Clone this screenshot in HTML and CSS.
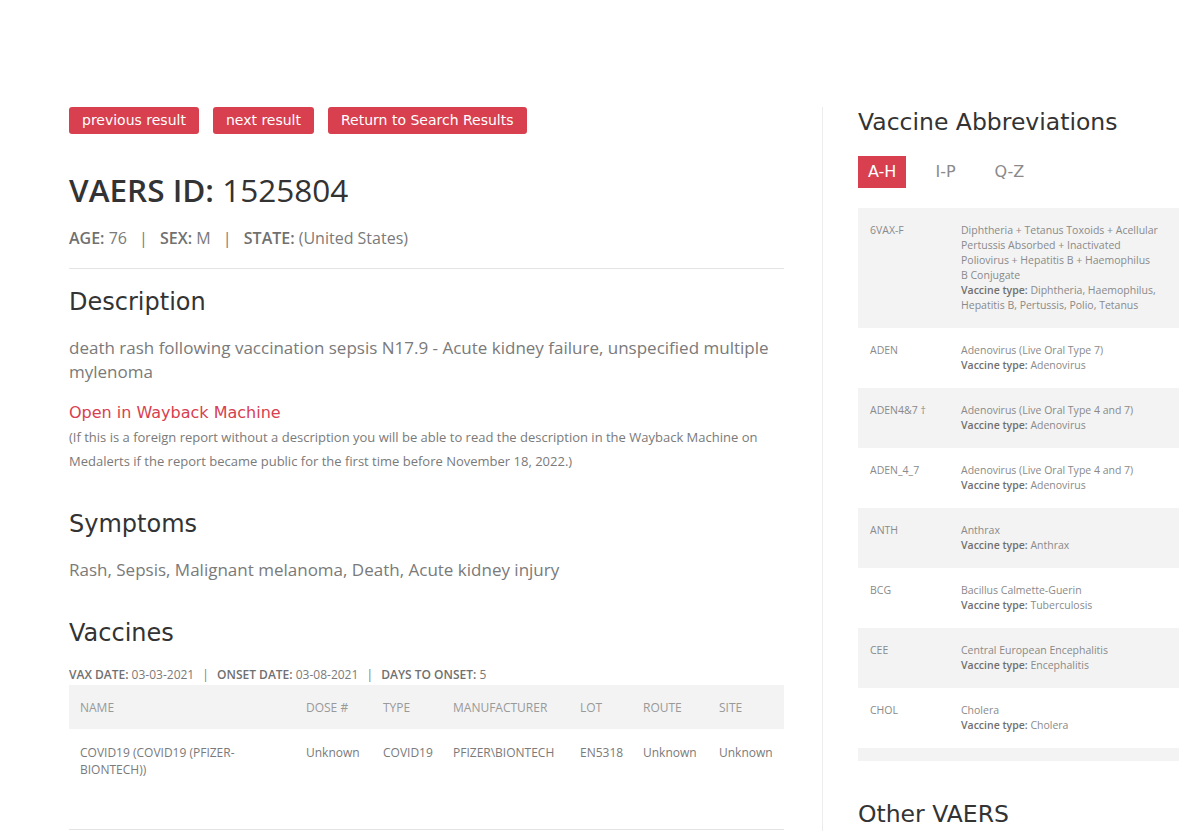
FILE: index.html
```html
<!DOCTYPE html>
<html lang="en">
  <head>
    <meta charset="UTF-8" />
    <meta name="viewport" content="width=device-width, initial-scale=1.0" />
    <title>VAERS ID: 1525804</title>
    <link rel="stylesheet" href="styles.css">
  </head>
  <body>
    <div class="page">
      <div class="main">
        <div class="actions">
          <a class="btn" href="#">previous result</a>
          <a class="btn" href="#">next result</a>
          <a class="btn" href="#">Return to Search Results</a>
        </div>

        <h1 class="report-title"><b>VAERS ID:</b> 1525804</h1>

        <div class="meta">
          <b>AGE:</b> 76 <span class="sep">|</span>
          <b>SEX:</b> M <span class="sep">|</span>
          <b>STATE:</b> (United States)
        </div>

        <hr class="rule" />

        <h2 class="section-title">Description</h2>
        <p class="lead">death rash following vaccination sepsis N17.9 - Acute kidney failure, unspecified multiple mylenoma</p>
        <a class="wayback" href="#">Open in Wayback Machine</a>
        <p class="note">(If this is a foreign report without a description you will be able to read the description in the Wayback Machine on Medalerts if the report became public for the first time before November 18, 2022.)</p>

        <h2 class="section-title after-note">Symptoms</h2>
        <p class="lead">Rash, Sepsis, Malignant melanoma, Death, Acute kidney injury</p>

        <h2 class="section-title after-lead">Vaccines</h2>
        <div class="dates">
          <b>VAX DATE:</b> 03-03-2021 <span class="sep">|</span>
          <b>ONSET DATE:</b> 03-08-2021 <span class="sep">|</span>
          <b>DAYS TO ONSET:</b> 5
        </div>

        <table class="vax-table">
          <colgroup>
            <col style="width: 226px">
            <col style="width: 77px">
            <col style="width: 70px">
            <col style="width: 127px">
            <col style="width: 63px">
            <col style="width: 76px">
            <col style="width: 76px">
          </colgroup>
          <thead>
            <tr>
              <th>Name</th>
              <th>Dose #</th>
              <th>Type</th>
              <th>Manufacturer</th>
              <th>Lot</th>
              <th>Route</th>
              <th>Site</th>
            </tr>
          </thead>
          <tbody>
            <tr>
              <td>COVID19 (COVID19 (PFIZER-BIONTECH))</td>
              <td>Unknown</td>
              <td>COVID19</td>
              <td>PFIZER\BIONTECH</td>
              <td>EN5318</td>
              <td>Unknown</td>
              <td>Unknown</td>
            </tr>
          </tbody>
        </table>
        <hr class="rule table-end" />
      </div>

      <div class="sidebar">
        <h2 class="side-title">Vaccine Abbreviations</h2>

        <div class="tabs">
          <span class="tab active">A-H</span>
          <span class="tab">I-P</span>
          <span class="tab">Q-Z</span>
        </div>

        <div class="abbr-box">
          <table class="abbr-table">
            <tr>
              <td class="abbr">6VAX-F</td>
              <td>Diphtheria + Tetanus Toxoids + Acellular Pertussis Absorbed + Inactivated Poliovirus + Hepatitis B + Haemophilus B&nbsp;Conjugate<br><b>Vaccine type:</b> Diphtheria, Haemophilus, Hepatitis B, Pertussis, Polio, Tetanus</td>
            </tr>
            <tr>
              <td class="abbr">ADEN</td>
              <td>Adenovirus (Live Oral Type 7)<br><b>Vaccine type:</b> Adenovirus</td>
            </tr>
            <tr>
              <td class="abbr">ADEN4&amp;7 &dagger;</td>
              <td>Adenovirus (Live Oral Type 4 and 7)<br><b>Vaccine type:</b> Adenovirus</td>
            </tr>
            <tr>
              <td class="abbr">ADEN_4_7</td>
              <td>Adenovirus (Live Oral Type 4 and 7)<br><b>Vaccine type:</b> Adenovirus</td>
            </tr>
            <tr>
              <td class="abbr">ANTH</td>
              <td>Anthrax<br><b>Vaccine type:</b> Anthrax</td>
            </tr>
            <tr>
              <td class="abbr">BCG</td>
              <td>Bacillus Calmette-Guerin<br><b>Vaccine type:</b> Tuberculosis</td>
            </tr>
            <tr>
              <td class="abbr">CEE</td>
              <td>Central European Encephalitis<br><b>Vaccine type:</b> Encephalitis</td>
            </tr>
            <tr>
              <td class="abbr">CHOL</td>
              <td>Cholera<br><b>Vaccine type:</b> Cholera</td>
            </tr>
            <tr>
              <td class="abbr">COVID19</td>
              <td>COVID19 (COVID19 (JANSSEN))<br><b>Vaccine type:</b> COVID19</td>
            </tr>
          </table>
        </div>

        <h2 class="side-title other-title">Other VAERS</h2>
      </div>
    </div>
  </body>
</html>
```

FILE: styles.css
```css
* {
  margin: 0;
  padding: 0;
  box-sizing: border-box;
}

body {
  font-family: "Open Sans", "DejaVu Sans", sans-serif;
  background: #ffffff;
  color: #777777;
  overflow: hidden;
}

.page {
  display: flex;
  align-items: flex-start;
  padding: 107px 0 0 69px;
}

.main {
  width: 754px;
  padding-right: 38px;
  border-right: 1px solid #ececec;
  min-height: 760px;
}

/* buttons */
.actions {
  display: flex;
  gap: 14px;
}

.btn {
  display: inline-block;
  height: 27px;
  line-height: 27px;
  padding: 0 13px;
  background: #d8404f;
  color: #ffffff;
  border-radius: 3px;
  font-family: "DejaVu Sans", sans-serif;
  font-size: 14px;
  text-decoration: none;
}

.report-title {
  margin-top: 36px;
  font-size: 31.5px;
  line-height: 40px;
  font-weight: normal;
  color: #333333;
}

.report-title b {
  font-weight: 600;
}

.meta {
  margin-top: 17px;
  font-size: 16px;
  line-height: 22px;
  color: #7a7a7a;
}

.meta b,
.dates b {
  font-weight: 600;
  color: #707070;
}

.meta .sep {
  padding: 0 8px;
}

.rule {
  border: 0;
  border-top: 1px solid #e4e4e4;
  margin: 19px 0 0;
}

.section-title {
  font-family: "DejaVu Sans", sans-serif;
  font-size: 24px;
  line-height: 30px;
  font-weight: normal;
  color: #333333;
  margin-top: 18px;
}

.section-title.after-note,
.section-title.after-lead {
  margin-top: 36px;
}

.lead {
  margin-top: 19px;
  font-size: 17px;
  line-height: 24px;
  color: #7a7a7a;
}

.wayback {
  display: block;
  margin-top: 17px;
  font-family: "DejaVu Sans", sans-serif;
  font-size: 16px;
  line-height: 24px;
  color: #d8404f;
  text-decoration: none;
}

.note {
  font-size: 13px;
  line-height: 24px;
  color: #7a7a7a;
}

.dates {
  margin-top: 19px;
  font-size: 12px;
  line-height: 16px;
  color: #7a7a7a;
}

.dates .sep {
  padding: 0 5px;
}

/* vaccines table */
.vax-table {
  margin-top: 2px;
  width: 100%;
  table-layout: fixed;
  border-collapse: collapse;
  font-size: 12px;
  color: #7a7a7a;
}

.vax-table th {
  background: #f3f3f3;
  height: 44px;
  padding: 0 0 0 11px;
  text-align: left;
  font-weight: normal;
  text-transform: uppercase;
  color: #999999;
}

.vax-table td {
  padding: 15px 11px 51px 11px;
  line-height: 17px;
  vertical-align: top;
}

.vax-table td + td {
  padding-right: 0;
}

.table-end {
  margin-top: 0;
}

/* sidebar */
.sidebar {
  width: 356px;
  padding-left: 35px;
}

.side-title {
  font-family: "DejaVu Sans", sans-serif;
  font-size: 23.5px;
  line-height: 30px;
  font-weight: normal;
  color: #333333;
}

.tabs {
  display: flex;
  gap: 19px;
  margin-top: 19px;
}

.tab {
  display: inline-block;
  height: 32px;
  line-height: 32px;
  padding: 0 10px;
  font-family: "DejaVu Sans", sans-serif;
  font-size: 16px;
  color: #8a8a8a;
}

.tab.active {
  background: #d8404f;
  color: #ffffff;
}

.abbr-box {
  margin-top: 20px;
  width: 321px;
  height: 553px;
  overflow: hidden;
}

.abbr-table {
  width: 100%;
  table-layout: fixed;
  border-collapse: collapse;
  font-size: 10.5px;
  line-height: 15px;
  color: #8a8a8a;
}

.abbr-table tr:nth-child(odd) {
  background: #f3f3f3;
}

.abbr-table td {
  padding: 15px 13px 15px 12px;
  vertical-align: top;
}

.abbr-table td.abbr {
  width: 91px;
  color: #8a8a8a;
}

.abbr-table b {
  font-weight: 600;
  color: #707070;
}

.other-title {
  margin-top: 38px;
}
```
